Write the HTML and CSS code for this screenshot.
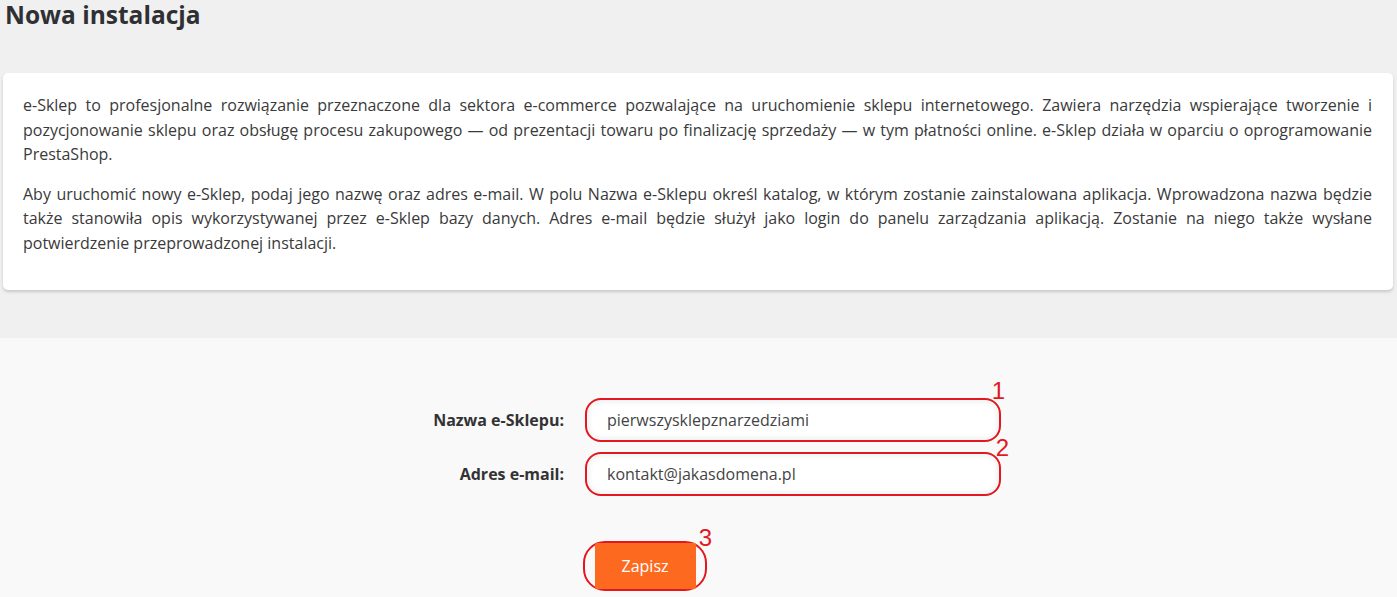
FILE: index.html
```html
<!DOCTYPE html>
<html lang="pl">
<head>
<meta charset="utf-8">
<title>Nowa instalacja</title>
<link rel="stylesheet" href="styles.css">
</head>
<body>
<header class="top">
  <h1 class="title">Nowa instalacja</h1>
  <div class="card">
    <p>e-Sklep to profesjonalne rozwiązanie przeznaczone dla sektora e-commerce pozwalające na uruchomienie sklepu internetowego. Zawiera narzędzia wspierające tworzenie i pozycjonowanie sklepu oraz obsługę procesu zakupowego — od prezentacji towaru po finalizację sprzedaży — w tym płatności online. e-Sklep działa w oparciu o oprogramowanie PrestaShop.</p>
    <p>Aby uruchomić nowy e-Sklep, podaj jego nazwę oraz adres e-mail. W polu Nazwa e-Sklepu określ katalog, w którym zostanie zainstalowana aplikacja. Wprowadzona nazwa będzie także stanowiła opis wykorzystywanej przez e-Sklep bazy danych. Adres e-mail będzie służył jako login do panelu zarządzania aplikacją. Zostanie na niego także wysłane potwierdzenie przeprowadzonej instalacji.</p>
  </div>
</header>
<main class="form-area">
  <form class="form">
    <label class="label" for="name">Nazwa e-Sklepu:</label>
    <div class="annot">
      <input class="input" id="name" type="text" value="pierwszysklepznarzedziami">
      <span class="num num-1">1</span>
    </div>
    <label class="label" for="email">Adres e-mail:</label>
    <div class="annot">
      <input class="input" id="email" type="text" value="kontakt@jakasdomena.pl">
      <span class="num num-2">2</span>
    </div>
    <div class="btn-cell">
      <div class="annot annot-btn">
        <button class="btn" type="button">Zapisz</button>
        <span class="num num-3">3</span>
      </div>
    </div>
  </form>
</main>
</body>
</html>
```
FILE: styles.css
```css
html, body {
  margin: 0;
  padding: 0;
}
body {
  background: #f0f0f0;
  font-family: "Open Sans", "Noto Sans", sans-serif;
  color: #3c3c3c;
  height: 597px;
  overflow: hidden;
  display: flex;
  flex-direction: column;
}
.top {
  padding: 0 4px 48px 3px;
}
.title {
  margin: 0;
  padding: 0 0 0 2px;
  font-size: 24.5px;
  font-weight: 700;
  line-height: 30px;
  color: #2f3033;
  height: 73px;
}
.card {
  background: #fff;
  border-radius: 5px;
  box-shadow: 0 2px 3px rgba(120, 130, 140, 0.35);
  padding: 20px 21px 20px 20px;
}
.card p {
  margin: 0 0 15px;
  font-size: 16px;
  line-height: 24.5px;
  text-align: justify;
  color: #3a3a3a;
}
.form-area {
  flex: 1;
  background: #f9f9f9;
  padding-top: 60px;
}
.form {
  display: grid;
  grid-template-columns: 564px 416px;
  column-gap: 21px;
  row-gap: 10px;
  align-items: center;
}
.label {
  text-align: right;
  font-weight: 700;
  font-size: 16px;
  color: #333;
}
.annot {
  position: relative;
  border: 2px solid #e3171f;
  border-radius: 16px;
  padding: 1px;
  height: 38px;
  box-sizing: content-box;
  display: flex;
}
.input {
  flex: 1;
  border: none;
  border-radius: 12px;
  background: #fff;
  box-shadow: inset 0 0 6px rgba(0, 0, 0, 0.09);
  padding: 0 0 0 19px;
  font-family: "Open Sans", "Noto Sans", sans-serif;
  font-size: 16px;
  color: #444;
  outline: none;
  margin: 0;
}
.num {
  position: absolute;
  font-family: "Liberation Sans", Arial, sans-serif;
  font-size: 24px;
  line-height: 24px;
  color: #e3171f;
}
.num-1 {
  right: -6px;
  top: -21px;
}
.num-2 {
  right: -10px;
  top: -18px;
}
.btn-cell {
  grid-column: 2;
  margin-top: 35px;
  margin-left: -2px;
}
.annot-btn {
  display: inline-flex;
  width: 120px;
  height: 46px;
  padding: 0;
  border-radius: 22px;
  justify-content: center;
  align-items: center;
}
.btn {
  width: 101px;
  height: 46px;
  border: none;
  border-radius: 2px;
  background: #fd6a1f;
  color: #fff;
  font-family: "Open Sans", "Noto Sans", sans-serif;
  font-size: 16px;
  cursor: pointer;
}
.num-3 {
  right: -7px;
  top: -17px;
}
```
